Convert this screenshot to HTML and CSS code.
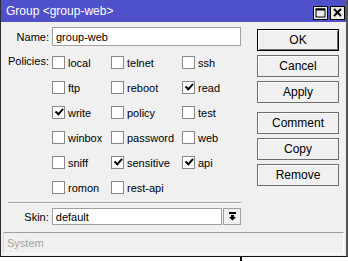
FILE: index.html
```html
<!DOCTYPE html>
<html lang="en">
<head>
    <meta charset="UTF-8">
    <title>Group &lt;group-web&gt;</title>
    <link rel="stylesheet" href="styles.css">
</head>
<body>
    <div class="window">
        <div class="titlebar">
            <span class="title">Group &lt;group-web&gt;</span>
            <div class="title-buttons">
                <span class="tbtn">
                    <svg width="11" height="10" viewBox="0 0 11 10"><rect x="1" y="1" width="9" height="8" fill="none" stroke="#000" stroke-width="1"/><rect x="1" y="0.5" width="9" height="2" fill="#000"/></svg>
                </span>
                <span class="tbtn">
                    <svg width="9" height="9" viewBox="0 0 9 9"><path d="M1 1 L8 8 M8 1 L1 8" stroke="#000" stroke-width="2"/></svg>
                </span>
            </div>
        </div>

        <div class="main">
            <div class="form">
                <div class="row name-row">
                    <label class="label">Name:</label>
                    <div class="input name-input">group-web</div>
                </div>

                <div class="row policies-row">
                    <span class="label">Policies:</span>
                    <div class="policies">
                        <div class="cb"><span class="box"></span>local</div>
                        <div class="cb"><span class="box"></span>telnet</div>
                        <div class="cb"><span class="box"></span>ssh</div>
                        <div class="cb"><span class="box"></span>ftp</div>
                        <div class="cb"><span class="box"></span>reboot</div>
                        <div class="cb"><span class="box checked"></span>read</div>
                        <div class="cb"><span class="box checked"></span>write</div>
                        <div class="cb"><span class="box"></span>policy</div>
                        <div class="cb"><span class="box"></span>test</div>
                        <div class="cb"><span class="box"></span>winbox</div>
                        <div class="cb"><span class="box"></span>password</div>
                        <div class="cb"><span class="box"></span>web</div>
                        <div class="cb"><span class="box"></span>sniff</div>
                        <div class="cb"><span class="box checked"></span>sensitive</div>
                        <div class="cb"><span class="box checked"></span>api</div>
                        <div class="cb"><span class="box"></span>romon</div>
                        <div class="cb"><span class="box"></span>rest-api</div>
                    </div>
                </div>

                <div class="separator"></div>

                <div class="row skin-row">
                    <span class="label">Skin:</span>
                    <div class="input skin-input">default</div>
                    <span class="dropdown">
                        <svg width="9" height="9" viewBox="0 0 9 9"><rect x="1" y="0" width="7" height="2" fill="#000"/><path d="M3 3 H6 V5 H8 L4.5 8.5 L1 5 H3 Z" fill="#000"/></svg>
                    </span>
                </div>
            </div>

            <div class="buttons">
                <div class="btn default">OK</div>
                <div class="btn">Cancel</div>
                <div class="btn">Apply</div>
                <div class="btn spaced">Comment</div>
                <div class="btn">Copy</div>
                <div class="btn">Remove</div>
            </div>
        </div>

        <div class="statusbar">System</div>
    </div>
    <div class="behind"></div>
</body>
</html>
```

FILE: styles.css
```css
* {
    margin: 0;
    padding: 0;
    box-sizing: border-box;
}

body {
    width: 348px;
    height: 261px;
    overflow: hidden;
    background: #ffffff;
    font-family: 'Liberation Sans', Arial, sans-serif;
    font-size: 11px;
    color: #000;
}

.window {
    width: 348px;
    height: 257px;
    background: #f0f0f0;
    border-left: 1px solid #2b2b2b;
    border-right: 2px solid #555;
    border-bottom: 1px solid #111;
}

.titlebar {
    height: 22px;
    background: #4e51c9;
    color: #fff;
    display: flex;
    align-items: center;
    justify-content: space-between;
    padding: 0 1px 0 5px;
    font-size: 12px;
}

.title-buttons {
    display: flex;
    gap: 2px;
    padding-top: 3px;
}

.tbtn {
    width: 15px;
    height: 14px;
    background: #ebebeb;
    border: 1px solid #000;
    display: flex;
    align-items: center;
    justify-content: center;
}

.main {
    display: flex;
    gap: 16px;
}

.form {
    width: 240px;
    padding-top: 5px;
}

.row {
    display: flex;
}

.label {
    width: 48px;
    text-align: right;
    margin-right: 3px;
}

.name-row {
    align-items: center;
    height: 19px;
}

.input {
    background: #fff;
    border: 1px solid #a0a0a0;
    padding-left: 3px;
    display: flex;
    align-items: center;
}

.name-input {
    width: 189px;
    height: 19px;
}

.policies-row {
    margin-top: 4px;
}

.policies-row .label {
    padding-top: 5px;
}

.policies {
    display: grid;
    grid-template-columns: 59px 71px 1fr;
    grid-auto-rows: 25px;
}

.cb {
    display: flex;
    align-items: center;
    gap: 3px;
}

.box {
    width: 13px;
    height: 13px;
    background: #fff;
    border: 1px solid #888;
    position: relative;
}

.box.checked::after {
    content: '';
    position: absolute;
    left: 2px;
    top: 1px;
    width: 6px;
    height: 3px;
    border-left: 2px solid #000;
    border-bottom: 2px solid #000;
    transform: rotate(-48deg);
    transform-origin: 3px 3px;
    top: 2px;
    left: 3px;
}

.separator {
    margin: 2px 0 0 7px;
    height: 2px;
    border-top: 1px solid #a0a0a0;
    border-bottom: 1px solid #fff;
}

.skin-row {
    margin-top: 4px;
    align-items: center;
    height: 17px;
}

.skin-input {
    width: 171px;
    height: 17px;
}

.dropdown {
    width: 18px;
    height: 17px;
    margin-left: 1px;
    border: 1px solid #a0a0a0;
    background: #f0f0f0;
    display: flex;
    align-items: center;
    justify-content: center;
}

.buttons {
    width: 82px;
    padding-top: 7px;
    display: flex;
    flex-direction: column;
    gap: 4px;
}

.btn {
    height: 22px;
    border: 1px solid #6e6e6e;
    box-shadow: inset 1px 1px 0 #fff;
    background: #f0f0f0;
    display: flex;
    align-items: center;
    justify-content: center;
    font-size: 12px;
}

.btn.default {
    border: 1px solid #000;
    box-shadow: inset 1px 1px 0 #fff, inset -1px -1px 0 #6e6e6e;
}

.btn.spaced {
    margin-top: 5px;
}

.statusbar {
    margin: 7px 2px 0 2px;
    height: 22px;
    border-top: 1px solid #a0a0a0;
    border-left: 1px solid #d8d8d8;
    border-bottom: 1px solid #fff;
    border-right: 1px solid #fff;
    color: #a0a0a0;
    padding-left: 3px;
    display: flex;
    align-items: center;
}

.behind {
    margin-left: 240px;
    width: 2px;
    height: 4px;
    background: #000;
}
```
